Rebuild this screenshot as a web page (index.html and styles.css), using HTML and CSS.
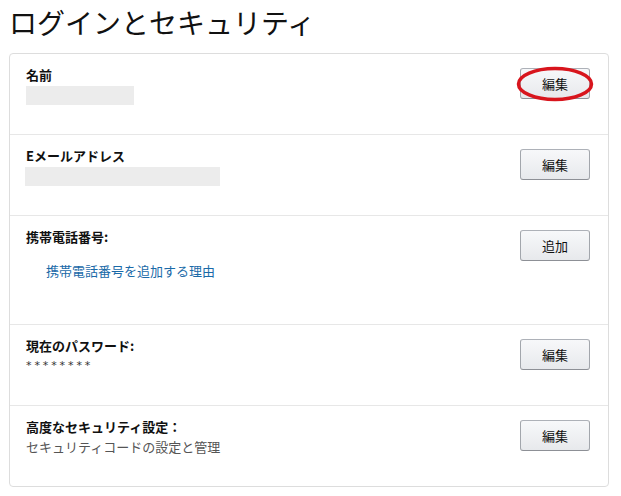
FILE: index.html
```html
<!DOCTYPE html>
<html lang="ja">
<head>
<meta charset="utf-8">
<link rel="stylesheet" href="styles.css">
</head>
<body>
<h1 class="title">ログインとセキュリティ</h1>
<div class="card">
  <div class="row">
    <div class="info">
      <div class="label">名前</div>
      <div class="mask mask-name"></div>
    </div>
    <div class="btn-wrap">
      <button class="btn">編集</button>
      <svg class="circle" viewBox="0 0 78 36" width="78" height="36"><ellipse cx="39" cy="18" rx="36.5" ry="15.5" fill="none" stroke="#d8151d" stroke-width="3.5"/></svg>
    </div>
  </div>
  <div class="row">
    <div class="info">
      <div class="label">Eメールアドレス</div>
      <div class="mask mask-mail"></div>
    </div>
    <div class="btn-wrap"><button class="btn">編集</button></div>
  </div>
  <div class="row row-tall">
    <div class="info">
      <div class="label">携帯電話番号:</div>
      <a class="link" href="#">携帯電話番号を追加する理由</a>
    </div>
    <div class="btn-wrap"><button class="btn">追加</button></div>
  </div>
  <div class="row">
    <div class="info">
      <div class="label">現在のパスワード:</div>
      <div class="stars">********</div>
    </div>
    <div class="btn-wrap"><button class="btn">編集</button></div>
  </div>
  <div class="row">
    <div class="info">
      <div class="label">高度なセキュリティ設定：</div>
      <div class="sub">セキュリティコードの設定と管理</div>
    </div>
    <div class="btn-wrap"><button class="btn">編集</button></div>
  </div>
</div>
</body>
</html>
```
FILE: styles.css
```css
* { box-sizing: border-box; }
body {
  margin: 0;
  padding: 0 9px;
  background: #fff;
  font-family: "Noto Sans CJK JP", "Noto Sans", sans-serif;
  color: #111;
}
.title {
  margin: 0 0 9px 0;
  font-size: 28px;
  font-weight: 400;
  line-height: 44px;
  height: 44px;
  color: #111;
}
.card {
  width: 600px;
  border: 1px solid #ddd;
  border-radius: 4px;
}
.row {
  display: flex;
  justify-content: space-between;
  align-items: flex-start;
  height: 80px;
  padding: 0 18px 0 16px;
}
.row + .row {
  border-top: 1px solid #e7e7e7;
  height: 81px;
}
.row.row-tall { height: 109px; }
.info {
  padding-top: 11px;
  display: flex;
  flex-direction: column;
  align-items: flex-start;
}
.label {
  font-size: 13px;
  font-weight: 700;
  line-height: 20px;
}
.mask {
  background: #ececec;
  height: 19px;
  margin-top: 1px;
}
.mask-name { width: 108px; }
.mask-mail { width: 195px; margin-left: -1px; }
.link {
  margin: 14px 0 0 20px;
  font-size: 13px;
  line-height: 20px;
  color: #1a6aa8;
  text-decoration: none;
}
.stars {
  font-family: "DejaVu Sans", sans-serif;
  font-size: 11px;
  line-height: 14px;
  letter-spacing: 2.9px;
  margin-top: 3px;
  color: #333;
}
.sub {
  font-size: 13px;
  line-height: 20px;
  color: #555;
}
.btn-wrap {
  position: relative;
  margin-top: 14px;
}
.btn {
  display: block;
  width: 70px;
  height: 31px;
  padding: 0;
  border: 1px solid #adb1b8;
  border-color: #adb1b8 #a2a6ac #8d9096;
  border-radius: 3px;
  background: linear-gradient(#f7f8fa, #e7e9ec);
  font-family: "Noto Sans CJK JP", sans-serif;
  font-size: 13px;
  color: #111;
}
.circle {
  position: absolute;
  left: -4px;
  top: -2px;
  pointer-events: none;
}
```
